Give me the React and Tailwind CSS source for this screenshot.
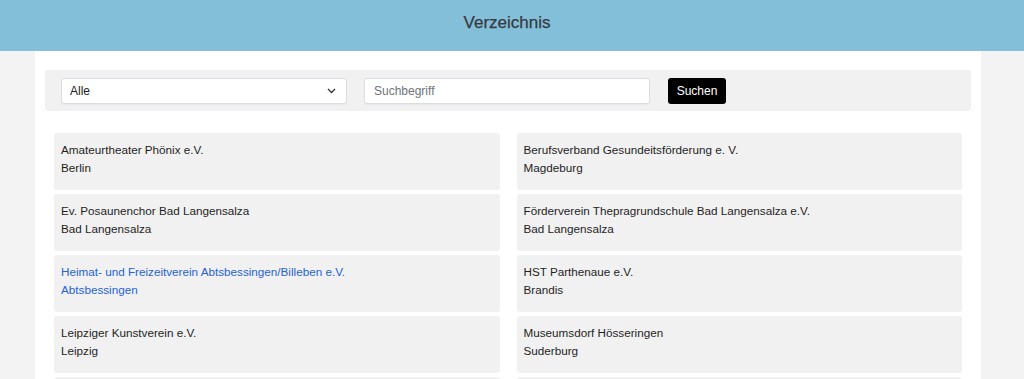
import React from 'react';

const entries = [
    { name: 'Amateurtheater Phönix e.V.', city: 'Berlin' },
    { name: 'Berufsverband Gesundeitsförderung e. V.', city: 'Magdeburg' },
    { name: 'Ev. Posaunenchor Bad Langensalza', city: 'Bad Langensalza' },
    { name: 'Förderverein Thepragrundschule Bad Langensalza e.V.', city: 'Bad Langensalza' },
    { name: 'Heimat- und Freizeitverein Abtsbessingen/Billeben e.V.', city: 'Abtsbessingen', active: true },
    { name: 'HST Parthenaue e.V.', city: 'Brandis' },
    { name: 'Leipziger Kunstverein e.V.', city: 'Leipzig' },
    { name: 'Museumsdorf Hösseringen', city: 'Suderburg' },
];

const App = () => {
    return (
        <div className="min-h-screen bg-[#f3f3f3] font-['Liberation_Sans',Arial,sans-serif] text-[#222]">
            <header className="h-[51px] bg-[#84bfd9] flex items-center justify-center">
                <h1 className="text-[17px] text-[#353a3f] -mt-[6px] mr-[10px] [-webkit-text-stroke:0.25px_#353a3f]">Verzeichnis</h1>
            </header>

            <main className="ml-[35px] w-[946px] bg-white pt-[19px] pb-4">
                {/* Suchleiste */}
                <div className="mx-[10px] h-[41px] bg-[#f1f1f1] rounded-[3px] flex items-center pl-4 gap-[17px]">
                    <div className="relative w-[286px] h-[26px]">
                        <select className="appearance-none w-full h-full bg-white border border-[#dadde1] rounded-[3px] pl-[8px] text-[12px] text-[#222] shadow-[0_1px_1px_rgba(0,0,0,0.04)] outline-none">
                            <option>Alle</option>
                        </select>
                        <svg className="absolute right-[11px] top-[10px] pointer-events-none" width="9" height="6" viewBox="0 0 9 6" fill="none">
                            <path d="M1 1l3.5 3.5L8 1" stroke="#333" strokeWidth="1.3" />
                        </svg>
                    </div>
                    <input
                        type="text"
                        placeholder="Suchbegriff"
                        className="w-[286px] h-[26px] bg-white border border-[#dadde1] rounded-[3px] pl-[9px] text-[12px] placeholder:text-[#6f747a] shadow-[0_1px_1px_rgba(0,0,0,0.04)] outline-none"
                    />
                    <button className="ml-px h-[26px] w-[58px] bg-black text-white text-[12px] rounded-[3px]">
                        Suchen
                    </button>
                </div>

                {/* Einträge */}
                <div className="mt-[22px] mx-[19px] grid grid-cols-2 gap-x-[17px] gap-y-[4px]">
                    {entries.map((e) => (
                        <div key={e.name} className="h-[57px] bg-[#f1f1f1] rounded-[3px] px-[7px] pt-[8px]">
                            <div className={`text-[11.7px] leading-[18px] ${e.active ? 'text-[#2563d8]' : 'text-[#1f1f1f]'}`}>
                                <div>{e.name}</div>
                                <div>{e.city}</div>
                            </div>
                        </div>
                    ))}
                    <div className="h-[57px] bg-[#f1f1f1] rounded-[3px]" />
                    <div className="h-[57px] bg-[#f1f1f1] rounded-[3px]" />
                </div>
            </main>
        </div>
    );
};

export default App;
